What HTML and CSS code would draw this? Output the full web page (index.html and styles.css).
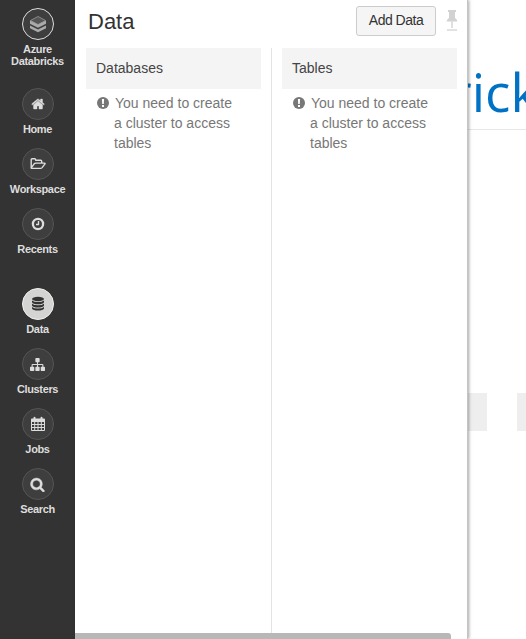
FILE: index.html
```html
<!DOCTYPE html>
<html lang="en">
<head>
<meta charset="utf-8">
<title>Data</title>
<link rel="stylesheet" href="styles.css">
</head>
<body>
<div class="app">
  <nav class="sidebar">
    <a class="item brand"><span class="disc"><svg width="18" height="18" viewBox="0 0 18 18"><path fill="#555" stroke="#888" d="M1.500 5.500 9 1.500l7.500 4L9 9.500z"/><path fill="#aaa" d="M1 5.500l8 4 8-4v3.200l-8 4.100-8-4.100zM1 10.500l8 4 8-4v2.700l-8 4.100-8-4.100z"/></svg></span><span>Azure<br>Databricks</span></a>
    <a class="item"><span class="disc"><svg width="14" height="14" viewBox="0 0 1792 1792"><path stroke="#ddd" stroke-width="50" d="M1472 992v480q0 26-19 45t-45 19h-384v-384h-256v384h-384q-26 0-45-19t-19-45v-480q0-1 .5-3t.5-3l575-474 575 474q1 2 1 6zm223-69l-62 74q-8 9-21 11h-3q-13 0-21-7l-692-577-692 577q-12 8-24 7-13-2-21-11l-62-74q-8-10-7-23.5t11-21.5l719-599q32-26 76-26t76 26l244 204v-195q0-14 9-23t23-9h192q14 0 23 9t9 23v408l219 182q10 8 11 21.5t-7 23.5z"/></svg></span><span>Home</span></a>
    <a class="item"><span class="disc"><svg width="16" height="14" viewBox="0 0 16 14"><path class="line" d="M1.2 10.8V2.7q0-1 1-1h2.500q1 0 1 1v.6h5q1 0 1 1v1.800M1.200 10.800l3-4q.6-.7 1.500-.7h8.600q1.300 0 .5 1l-2.700 3.500q-.7.8-1.600.8H2q-1 0-.8-.6z"/></svg></span><span>Workspace</span></a>
    <a class="item recent"><span class="disc"><svg width="14" height="14" viewBox="0 0 14 14"><circle class="ring" cx="7" cy="7" r="5.100"/><path class="line" d="M7.500 4v3.500H5"/></svg></span><span>Recents</span></a>
    <a class="item active"><span class="disc"><svg width="14" height="16" viewBox="0 0 14 16"><ellipse cx="7" cy="3" rx="6" ry="2.200"/><path d="M1 4.500q2 1.600 6 1.600t6-1.600v1.700q-1 2-6 2t-6-2zM1 7.700q2 1.600 6 1.600t6-1.600v1.700q-1 2-6 2t-6-2zM1 10.900q2 1.600 6 1.600t6-1.600v1.700q-1 2-6 2t-6-2z"/></svg></span><span>Data</span></a>
    <a class="item"><span class="disc"><svg width="15" height="15" viewBox="0 0 1792 1792"><path d="M1792 1248v320q0 40-28 68t-68 28h-320q-40 0-68-28t-28-68v-320q0-40 28-68t68-28h96v-192h-512v192h96q40 0 68 28t28 68v320q0 40-28 68t-68 28h-320q-40 0-68-28t-28-68v-320q0-40 28-68t68-28h96v-192h-512v192h96q40 0 68 28t28 68v320q0 40-28 68t-68 28h-320q-40 0-68-28t-28-68v-320q0-40 28-68t68-28h96v-192q0-52 38-90t90-38h512v-192h-96q-40 0-68-28t-28-68v-320q0-40 28-68t68-28h320q40 0 68 28t28 68v320q0 40-28 68t-68 28h-96v192h512q52 0 90 38t38 90v192h96q40 0 68 28t28 68z"/></svg></span><span>Clusters</span></a>
    <a class="item"><span class="disc"><svg width="14" height="16" viewBox="0 0 14 16"><path fill-rule="evenodd" d="M1 2.500h1.500V1.700q0-.9 1-.9t1 .9v.8h5v-.8q0-.9 1-.9t1 .9v.8H13q1 0 1 1V14q0 1-1 1H1q-1 0-1-1V3.500q0-1 1-1zM1 6v2h2.200V6zm3.200 0v2h2.300V6zm3.300 0v2h2.300V6zm3.300 0v2H13V6zM1 9v2h2.200V9zm3.200 0v2h2.300V9zm3.300 0v2h2.300V9zm3.300 0v2H13V9zM1 12v2h2.200v-2zm3.200 0v2h2.300v-2zm3.300 0v2h2.300v-2zm3.300 0v2H13v-2z"/></svg></span><span>Jobs</span></a>
    <a class="item"><span class="disc"><svg width="15" height="15" viewBox="0 0 1792 1792"><path stroke="#ddd" stroke-width="50" d="M1216 832q0-185-131.500-316.500t-316.500-131.500-316.500 131.500-131.500 316.500 131.500 316.500 316.500 131.500 316.500-131.500 131.500-316.500zm512 832q0 52-38 90t-90 38q-54 0-90-38l-343-342q-179 124-399 124-143 0-273.500-55.500t-225-150-150-225-55.500-273.500 55.500-273.500 150-225 225-150 273.500-55.500 273.500 55.500 225 150 150 225 55.500 273.500q0 220-124 399l343 343q37 37 37 90z"/></svg></span><span>Search</span></a>
  </nav>
  <section class="panel">
    <header class="head">
      <h1>Data</h1>
      <button class="add">Add Data</button>
      <svg class="pin" width="12" height="23" viewBox="0 0 12 23"><path fill="#d2d2d2" d="M2 1h8v2H9v6q2 1.200 2.500 3.500H.5Q1 10.200 3 9V3H2z"/><path fill="#d2d2d2" d="M5.300 12.500h1.400V19H5.300z"/><path fill="#e2e2e2" d="M1 20h10v2H1z"/></svg>
    </header>
    <div class="columns">
      <div class="column">
        <h2>Databases</h2>
        <p><svg class="warn" width="12" height="12" viewBox="0 0 12 12"><circle cx="6" cy="6" r="6"/><path fill="#fff" d="M4.900 2h2.200l-.3 5H5.200zM5 8h2v1.900H5z"/></svg>You need to create a cluster to access tables</p>
      </div>
      <div class="column">
        <h2>Tables</h2>
        <p><svg class="warn" width="12" height="12" viewBox="0 0 12 12"><circle cx="6" cy="6" r="6"/><path fill="#fff" d="M4.900 2h2.200l-.3 5H5.200zM5 8h2v1.900H5z"/></svg>You need to create a cluster to access tables</p>
      </div>
    </div>
    <div class="scrollbar"></div>
  </section>
  <main class="page">
    <div class="title">rick</div>
    <div class="tiles"><div class="tile"></div><div class="tile"></div></div>
  </main>
</div>
</body>
</html>
```
FILE: styles.css
```css
* { box-sizing: border-box; }
body { margin: 0; background: #fff; font-family: "Liberation Sans", Arial, sans-serif; overflow: hidden; }
.app { display: flex; width: 526px; height: 639px; overflow: hidden; }

.sidebar { flex: 0 0 75px; background: #333; padding-top: 8px; display: flex; flex-direction: column; }
.item { display: flex; flex-direction: column; align-items: center; height: 60px; flex: none; color: #ddd; font-size: 11px; font-weight: bold; line-height: 12px; letter-spacing: -0.35px; text-align: center; }
.item.brand { height: 80px; }
.item.recent { height: 80px; }
.disc { width: 32px; height: 32px; margin-bottom: 3px; border: 1px solid #555; border-radius: 50%; background: #3e3e3e; display: flex; align-items: center; justify-content: center; }
.disc svg { fill: #ddd; }
.brand .disc { border-color: #ddd; }
.active .disc { background: #d4d5d2; border-color: #f0f0f0; }
.active .disc svg { fill: #333; }
.disc .line { fill: none; stroke: #ddd; stroke-width: 1.4; stroke-linejoin: round; }
.disc .ring { fill: none; stroke: #ddd; stroke-width: 2.3; }

.panel { flex: 0 0 393px; position: relative; z-index: 1; background: #fff; border-right: 1px solid #c4c4c4; box-shadow: 1px 0 3px rgba(0,0,0,.35); display: flex; flex-direction: column; }
.head { height: 48px; padding: 6px 9px 0 13px; display: flex; align-items: flex-start; }
h1 { margin: 3px auto 0 0; font-size: 22px; line-height: 26px; font-weight: normal; color: #333; }
.add { width: 80px; height: 30px; padding: 0 0 2px; border: 1px solid #ccc; border-radius: 3px; background: #f5f5f5; color: #333; font: 14px "Liberation Sans", Arial, sans-serif; letter-spacing: -0.5px; }
.pin { margin: 3px 0 0 10px; }
.columns { flex: 1; display: flex; }
.column { flex: none; width: 197px; padding: 0 10px 0 11px; border-right: 1px solid #e3e3e3; }
.column + .column { width: 195px; padding: 0 10px; border-right: 0; }
h2 { margin: 0; height: 41px; padding-left: 10px; background: #f4f4f4; color: #444; font-size: 14px; line-height: 41px; font-weight: normal; }
p { margin: 4px 18px 0 28px; color: #777; font-size: 14px; line-height: 20px; text-indent: -17px; }
.warn { fill: #777; margin-right: 6px; vertical-align: -1px; }
.scrollbar { position: absolute; left: 0; bottom: 0; width: 376px; height: 6px; background: #b8b8b8; border-top-right-radius: 3px; }

.page { flex: 1; min-width: 0; }
.title { height: 130px; padding-top: 55px; border-bottom: 1px solid #e7e7e7; color: #0072c6; font: 53px/74px "Open Sans", "Noto Sans", sans-serif; white-space: nowrap; text-indent: -18px; }
.tiles { display: flex; gap: 30px; margin-top: 263px; }
.tile { flex: 0 0 19px; height: 38px; background: #eee; }
```
